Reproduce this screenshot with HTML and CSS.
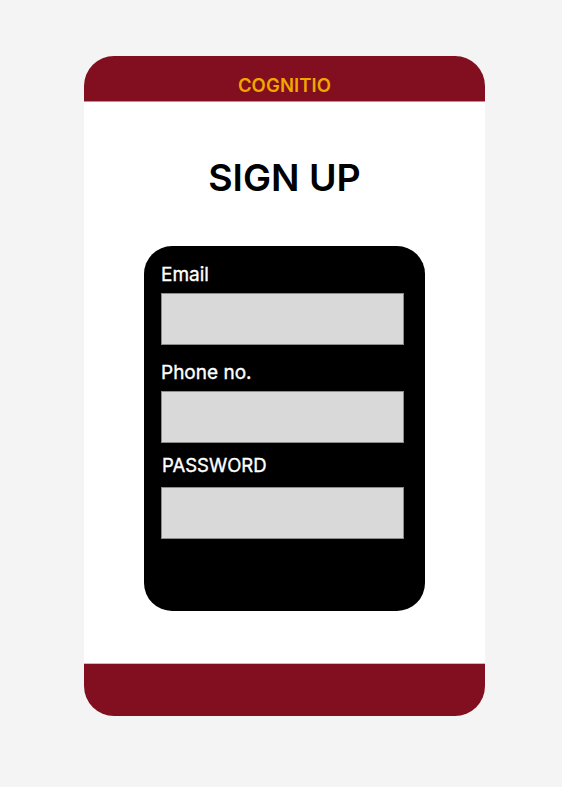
FILE: index.html
```html
<!DOCTYPE html>
<html lang="en">
<head>
<meta charset="utf-8">
<title>Cognitio - Sign up</title>
<link rel="stylesheet" href="styles.css">
</head>
<body>
<div class="frame">
  <header class="topbar">COGNITIO</header>
  <main class="content">
    <h1 class="title">SIGN UP</h1>
    <form class="card">
      <div class="field">
        <label class="field-label">Email</label>
        <div class="field-input"></div>
      </div>
      <div class="field field-phone">
        <label class="field-label">Phone no.</label>
        <div class="field-input"></div>
      </div>
      <div class="field field-password">
        <label class="field-label label-password">PASSWORD</label>
        <div class="field-input"></div>
      </div>
    </form>
  </main>
  <footer class="bottombar"></footer>
</div>
</body>
</html>
```

FILE: styles.css
```css
html, body {
  margin: 0;
  padding: 0;
}
body {
  background: #f4f4f4;
  font-family: Inter, "Noto Sans", sans-serif;
  width: 562px;
  height: 787px;
  overflow: hidden;
}
.frame {
  margin: 56px 0 0 84px;
  width: 401px;
  height: 660px;
  border-radius: 30px;
  overflow: hidden;
  display: flex;
  flex-direction: column;
  background: #ffffff;
}
.topbar {
  box-sizing: border-box;
  height: 46px;
  padding-top: 19px;
  background: #810f1f;
  color: #f2a600;
  font-weight: 600;
  font-size: 18.5px;
  line-height: 20px;
  letter-spacing: 0.1px;
  text-align: center;
  border-bottom: 1px solid #c98a92;
}
.content {
  flex: 1;
  display: flex;
  flex-direction: column;
  align-items: center;
  padding-top: 54px;
}
.title {
  margin: 0;
  font-size: 37.5px;
  font-weight: 600;
  line-height: 44px;
  color: #000000;
}
.card {
  box-sizing: border-box;
  margin-top: 46px;
  width: 281px;
  height: 365px;
  background: #000000;
  border-radius: 28px;
  padding: 19px 21px 0 17px;
  display: flex;
  flex-direction: column;
}
.field {
  display: flex;
  flex-direction: column;
}
.field-phone {
  margin-top: 18px;
}
.field-password {
  margin-top: 12px;
}
.field-label {
  display: block;
  height: 20px;
  margin-bottom: 8px;
  color: #ffffff;
  font-size: 19px;
  font-weight: 400;
  -webkit-text-stroke: 0.35px #ffffff;
  line-height: 20px;
}
.label-password {
  font-size: 18.5px;
  padding-left: 1px;
  margin-bottom: 12px;
}
.field-input {
  box-sizing: border-box;
  height: 52px;
  background: #d9d9d9;
  border: 1px solid #8c8c8c;
}
.bottombar {
  height: 53px;
  background: #810f1f;
  border-top: 1px solid #d9b5ba;
  box-sizing: border-box;
}
```
